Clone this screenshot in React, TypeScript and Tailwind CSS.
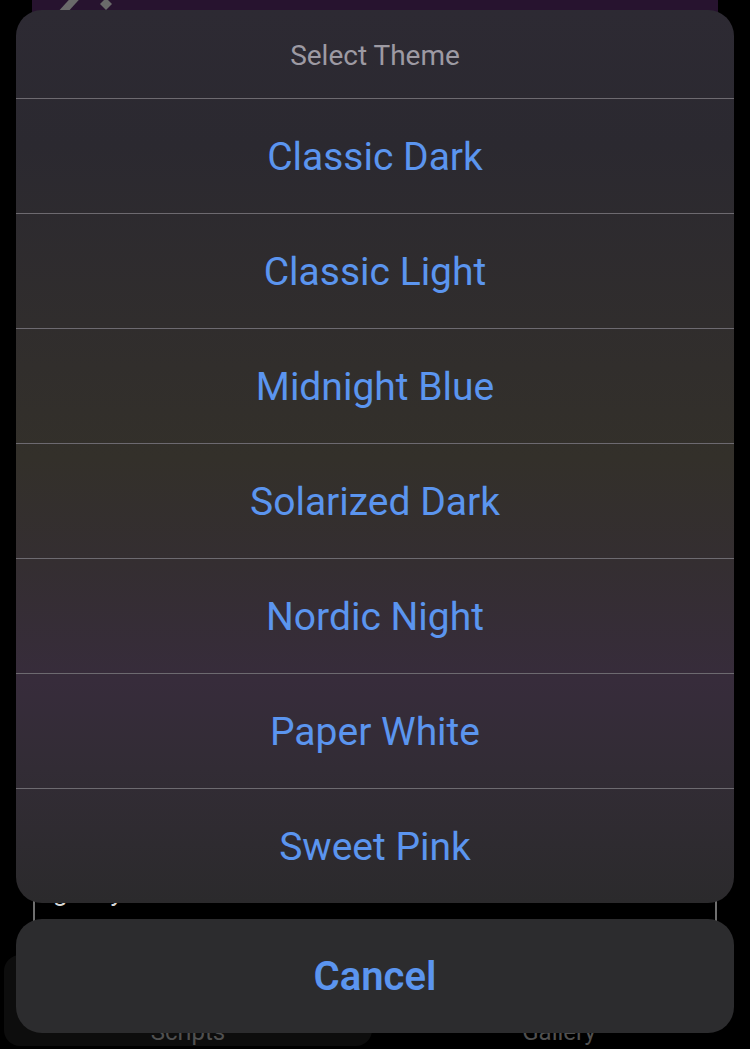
const themes = [
  "Classic Dark",
  "Classic Light",
  "Midnight Blue",
  "Solarized Dark",
  "Nordic Night",
  "Paper White",
  "Sweet Pink",
];

function Backdrop() {
  return (
    <div className="flex flex-col h-full">
      {/* header card peeking out above the sheet */}
      <div className="mx-[32px] h-[60px] bg-[#27132f] rounded-b-2xl relative shrink-0">
        <svg width="80" height="40" viewBox="0 0 80 40" className="absolute left-[18px] top-[-16px]">
          <path d="M6 30 L26 8 L36 8 L16 30 Z" fill="#6a6a6a" />
          <path d="M56 14 L62 20 L56 26 L50 20 Z" fill="#6a6a6a" />
        </svg>
      </div>
      <div className="flex-1 mt-[20px] mx-[33px] border-2 border-[#6f6f6f] border-t-0 flex flex-col justify-end pb-[41px] px-[18px]">
        <span className="text-[26px] text-[#d8d8d8]">gently</span>
      </div>
      <div className="h-[94px] flex px-[4px] pb-[3px] shrink-0">
        <div className="w-[368px] bg-[#0d0d0d] rounded-2xl flex items-end justify-center pb-[2px]">
          <span className="text-[24px] leading-none text-[#505050]">Scripts</span>
        </div>
        <div className="flex-1 flex items-end justify-center pb-[2px]">
          <span className="text-[24px] leading-none text-[#505050]">Gallery</span>
        </div>
      </div>
    </div>
  );
}

export default function App() {
  return (
    <div
      className="w-[750px] h-[1049px] bg-black relative overflow-hidden"
      style={{ fontFamily: "Roboto, 'Liberation Sans', sans-serif" }}
    >
      <Backdrop />

      <div className="absolute inset-0 flex flex-col px-[16px] pt-[10px] gap-[16px]">
        <div className="rounded-[26px] overflow-hidden bg-[linear-gradient(180deg,#2d2a33_0%,#2b2930_15%,#302d2d_35%,#33302a_50%,#342e31_62%,#372c3b_75%,#322c35_85%,#2b2a2c_100%)]">
          <div className="h-[88px] flex items-center justify-center pt-[3px]">
            <span className="text-[28px] text-[#9d9aa3]">Select Theme</span>
          </div>
          {themes.map((t) => (
            <div key={t} className="h-[115px] border-t border-[#6d6a70] flex items-center justify-center pt-[2px]">
              <span className="text-[39px] text-[#5b95ef]">{t}</span>
            </div>
          ))}
        </div>

        <div className="h-[114px] rounded-[26px] bg-[#2c2c2e] flex items-center justify-center pt-[2px]">
          <span className="text-[40px] font-semibold text-[#5b95ef]">Cancel</span>
        </div>
      </div>
    </div>
  );
}
